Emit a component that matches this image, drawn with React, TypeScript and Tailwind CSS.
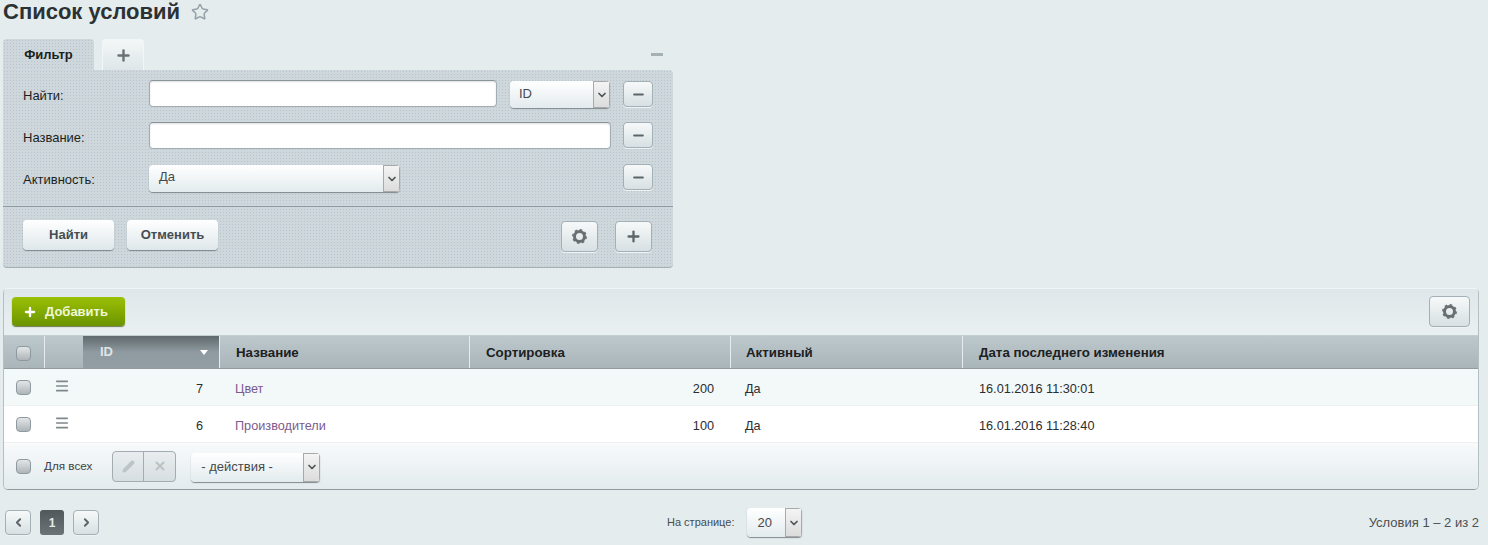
import { Plus, Minus, Star, Pencil, X, ChevronLeft, ChevronRight, ChevronDown, Menu } from 'lucide-react';
import type { ReactNode } from 'react';

const DOTS = 'bg-[#ced8dc] bg-[radial-gradient(#b9c5ca_0.7px,transparent_0.8px)] bg-[length:3px_3px]';
const BTN = 'flex items-center justify-center rounded-[4px] border border-[#a3b1b6] bg-gradient-to-b from-[#f7f9f9] to-[#d7e0e3] shadow-[0_1px_0_#eef3f4]';

const ROWS = [
  { id: 7, name: 'Цвет', sort: 200, active: 'Да', date: '16.01.2016 11:30:01', stripe: true },
  { id: 6, name: 'Производители', sort: 100, active: 'Да', date: '16.01.2016 11:28:40', stripe: false },
];

const COLS = 'grid grid-cols-[40px_39px_136px_250px_261px_232px_1fr]';

function Check() {
  return <span className="block h-[15px] w-[15px] rounded-[4px] border border-[#8e9a9f] bg-gradient-to-b from-[#e3e6e7] to-[#aeb5b8]" />;
}

function Gear() {
  return (
    <svg width="15" height="15" viewBox="0 0 15 15" fill="none" className="text-[#686e71]">
      <circle cx="7.5" cy="7.5" r="5" stroke="currentColor" strokeWidth="3" />
      <circle cx="7.5" cy="7.5" r="6.7" stroke="currentColor" strokeWidth="1.5" strokeDasharray="2.6 2.66" />
    </svg>
  );
}

function MinusBtn() {
  return (
    <button className={`${BTN} h-[26px] w-[30px]`}>
      <Minus size={15} strokeWidth={3.2} className="text-[#5d6568]" />
    </button>
  );
}

function SelectBox({ value, className, textClass = 'pl-[10px]' }: { value: string; className: string; textClass?: string }) {
  return (
    <div className={`flex items-stretch overflow-hidden rounded-[4px] bg-gradient-to-b from-white to-[#e3ebee] shadow-[0_1px_1px_#7f8a8e] ${className}`}>
      <span className={`flex flex-1 items-center text-[13px] text-[#46494b] ${textClass}`}>{value}</span>
      <span className="flex w-[17px] items-center justify-center border border-[#a9a9a9] bg-gradient-to-b from-[#f4f4f4] to-[#dcdcdc]">
        <ChevronDown size={12} strokeWidth={3.5} className="text-[#4f5558]" />
      </span>
    </div>
  );
}

function FilterRow({ label, children }: { label: string; children: ReactNode }) {
  return (
    <div className="flex h-[27px] items-start">
      <span className="w-[127px] pt-[6px] pl-[1px] text-[13px] text-[#1c1f20]">{label}</span>
      {children}
    </div>
  );
}

function TextBox({ className }: { className: string }) {
  return <div className={`h-[27px] rounded-[4px] border border-[#a1adb2] border-t-[#87949a] bg-white shadow-[inset_0_1px_2px_#e0e0e0] ${className}`} />;
}

function GrayBtn({ children }: { children: ReactNode }) {
  return (
    <button className="h-[30px] w-[91px] rounded-[4px] bg-gradient-to-b from-white to-[#dfe7ea] text-[13px] font-bold text-[#454d50] shadow-[0_1px_1px_#7c878b]">
      {children}
    </button>
  );
}

function HeadCell({ children, pad = 'pl-[16px]' }: { children: ReactNode; pad?: string }) {
  return (
    <div className={`flex items-center border-l border-[#e6ecee] pt-[2px] ${pad} text-[13.3px] font-bold text-[#1d2122]`}>{children}</div>
  );
}

export default function App() {
  return (
    <div className="h-[545px] w-[1488px] overflow-hidden bg-[#e4ecee] pl-[3px] font-['Liberation_Sans',Arial,sans-serif]">
      {/* Заголовок */}
      <div className="flex h-[39px] items-start">
        <h1 className="text-[22px] leading-[24px] font-bold text-[#2c3134]">Список условий</h1>
        <Star size={18} strokeWidth={2} className="mt-[3px] ml-[11px] text-[#94a1a8]" />
      </div>

      {/* Фильтр */}
      <div className="w-[670px]">
        <div className="flex h-[31px] items-end">
          <div className={`${DOTS} flex h-[31px] w-[91px] items-center justify-center rounded-t-[4px] text-[13px] font-bold text-[#1c1f20]`}>Фильтр</div>
          <div className="ml-[8px] flex h-[31px] w-[42px] items-center justify-center rounded-t-[4px] border border-b-0 border-[#f3f6f7] bg-gradient-to-b from-[#f4f7f8] to-[#dde6e9]">
            <Plus size={17} strokeWidth={3.4} className="text-[#6a7275]" />
          </div>
          <div className="mb-[14px] ml-auto mr-[10px] h-[3px] w-[12px] bg-[#a6b1b6]" />
        </div>
        <div className={`${DOTS} h-[198px] rounded-b-[4px] rounded-tr-[4px] border-b border-[#a5b0b5]`}>
          <div className="flex flex-col gap-[15px] pt-[10px] pr-[20px] pl-[19px]">
            <FilterRow label="Найти:">
              <TextBox className="w-[348px]" />
              <SelectBox value="ID" textClass="pb-[2px] pl-[9px]" className="mt-[1px] ml-[13px] h-[27px] w-[100px]" />
              <div className="mt-[1px] ml-auto"><MinusBtn /></div>
            </FilterRow>
            <FilterRow label="Название:">
              <TextBox className="w-[462px]" />
              <div className="ml-auto"><MinusBtn /></div>
            </FilterRow>
            <FilterRow label="Активность:">
              <SelectBox value="Да" textClass="pb-[3px] pl-[10px]" className="mt-[1px] h-[27px] w-[251px]" />
              <div className="ml-auto"><MinusBtn /></div>
            </FilterRow>
          </div>
          <div className="mt-[15px] flex h-[61px] items-start border-t border-[#8f9ca1] pt-[13px] pr-[21px] pl-[20px]">
            <GrayBtn>Найти</GrayBtn>
            <div className="ml-[13px]"><GrayBtn>Отменить</GrayBtn></div>
            <button className={`${BTN} mt-[1px] ml-auto h-[31px] w-[37px]`}><Gear /></button>
            <button className={`${BTN} mt-[1px] ml-[17px] h-[31px] w-[37px]`}>
              <Plus size={17} strokeWidth={3.2} className="text-[#5d6568]" />
            </button>
          </div>
        </div>
      </div>

      {/* Таблица */}
      <div className="mt-[20px] w-[1476px] overflow-hidden rounded-[5px] border border-[#b5c0c4] border-t-[#f2f5f6] border-b-[#8f9a9e]">
        <div className="flex h-[46px] items-center justify-between bg-gradient-to-b from-[#dfe7ea] to-[#eaf0f2] px-[8px] pb-[2px]">
          <button className="flex h-[29px] w-[113px] items-center rounded-[4px] bg-gradient-to-b from-[#9cc004] to-[#6b9400] pt-[1px] pl-[11px] text-[13px] font-bold text-[#f0f7d8] shadow-[0_1px_1px_#6d7a50]">
            <Plus size={14} strokeWidth={4} className="text-white" />
            <span className="ml-[8px]">Добавить</span>
          </button>
          <button className={`${BTN} h-[31px] w-[41px] border-[#7f8b90]`}><Gear /></button>
        </div>

        <div className={`${COLS} h-[34px] border-t border-b border-t-[#c3ced2] border-b-[#929c9f] bg-gradient-to-b from-[#bcc8cc] to-[#a9b5b9]`}>
          <div className="flex items-center pt-[2px] pl-[12px]"><Check /></div>
          <div className="border-l border-[#e6ecee]" />
          <div className="flex items-center justify-between bg-gradient-to-b from-[#5f696e] via-[#8f9ba0] to-[#929ea3] pr-[11px] pl-[17px] text-[13px] font-bold text-[#dfe5e7]">
            ID
            <span className="h-0 w-0 border-x-[4px] border-t-[5px] border-x-transparent border-t-white" />
          </div>
          <HeadCell>Название</HeadCell>
          <HeadCell>Сортировка</HeadCell>
          <HeadCell pad="pl-[15px]">Активный</HeadCell>
          <HeadCell>Дата последнего изменения</HeadCell>
        </div>

        {ROWS.map((r) => (
          <div key={r.id} className={`${COLS} h-[37px] border-b border-[#eef1f2] text-[12.7px] text-[#2b2e30] ${r.stripe ? 'bg-[#f3f8f9]' : 'bg-white'}`}>
            <div className="flex items-center pl-[12px]"><Check /></div>
            <div className="flex items-center pb-[2px] pl-[10px]"><Menu size={16} strokeWidth={2.4} className="text-[#7f888b]" /></div>
            <div className="flex items-center justify-end pt-[6px] pr-[16px]">{r.id}</div>
            <div className="flex items-center pt-[6px] pl-[16px] text-[#7c5a8e]">{r.name}</div>
            <div className="flex items-center justify-end pt-[6px] pr-[16px]">{r.sort}</div>
            <div className="flex items-center pt-[6px] pl-[15px]">{r.active}</div>
            <div className="flex items-center pt-[6px] pl-[17px]">{r.date}</div>
          </div>
        ))}

        <div className="flex h-[46px] items-center bg-gradient-to-b from-[#f8fafb] to-[#e3ebee] pl-[12px]">
          <Check />
          <span className="ml-[13px] text-[11.7px] text-[#3c4245]">Для всех</span>
          <div className="ml-[20px] flex h-[31px] w-[64px] overflow-hidden rounded-[4px] border border-[#a3adb1] bg-gradient-to-b from-[#e9edef] to-[#d7dee1]">
            <span className="flex w-[31px] items-center justify-center border-r border-[#a3adb1]">
              <Pencil size={13} strokeWidth={2} className="fill-current text-[#bcc4c7]" />
            </span>
            <span className="flex flex-1 items-center justify-center">
              <X size={14} strokeWidth={3.6} className="text-[#bcc4c7]" />
            </span>
          </div>
          <SelectBox value="- действия -" className="mt-[2px] ml-[15px] h-[29px] w-[129px]" />
        </div>
      </div>

      {/* Постраничка */}
      <div className="flex h-[54px] items-center pt-[11px] pr-[9px] pl-[2px]">
        <button className={`${BTN} h-[25px] w-[26px]`}><ChevronLeft size={13} strokeWidth={3.5} className="text-[#5d6568]" /></button>
        <span className="ml-[9px] flex h-[25px] w-[24px] items-center justify-center rounded-[3px] bg-gradient-to-b from-[#50585c] to-[#6c7478] text-[12px] font-bold text-[#e5eaec]">1</span>
        <button className={`${BTN} ml-[9px] h-[25px] w-[26px]`}><ChevronRight size={13} strokeWidth={3.5} className="text-[#5d6568]" /></button>
        <span className="ml-[568px] text-[11px] text-[#474c4f]">На странице:</span>
        <SelectBox value="20" className="ml-[13px] h-[29px] w-[55px]" />
        <span className="ml-auto text-[13px] text-[#4b5053]">Условия 1 – 2 из 2</span>
      </div>
    </div>
  );
}
